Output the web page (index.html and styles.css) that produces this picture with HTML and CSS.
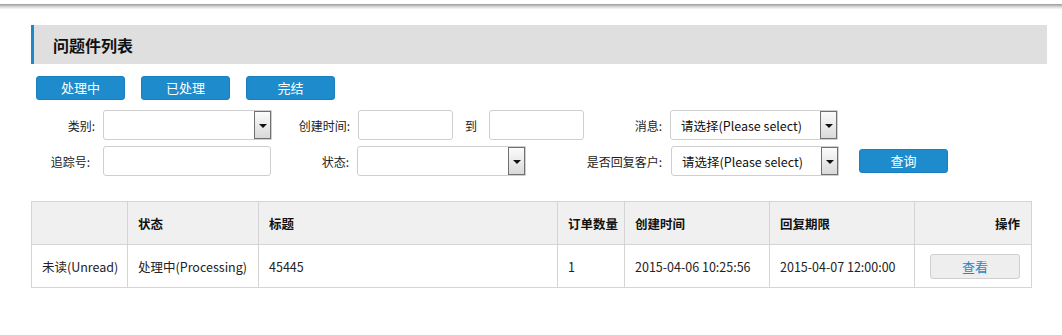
FILE: index.html
```html
<!DOCTYPE html>
<html lang="zh">
<head>
<meta charset="utf-8">
<title>问题件列表</title>
<link rel="stylesheet" href="styles.css">
</head>
<body>
<div class="topline"></div>
<div class="page">
  <div class="title-bar"><h2>问题件列表</h2></div>
  <div class="tabs">
    <button class="btn">处理中</button>
    <button class="btn">已处理</button>
    <button class="btn">完结</button>
  </div>
  <div class="form">
    <div class="row">
      <span class="lbl l1">类别:</span>
      <div class="sel w169"><span class="val"></span><span class="arrow"></span></div>
      <span class="lbl l2">创建时间:</span>
      <div class="inp w95"></div>
      <span class="to">到</span>
      <div class="inp w95"></div>
      <span class="lbl l3">消息:</span>
      <div class="sel w168"><span class="val">请选择(Please select)</span><span class="arrow"></span></div>
    </div>
    <div class="row r2">
      <span class="lbl l1 b">追踪号:</span>
      <div class="inp w168"></div>
      <span class="lbl l2 c">状态:</span>
      <div class="sel w169"><span class="val"></span><span class="arrow"></span></div>
      <span class="lbl l3 d">是否回复客户:</span>
      <div class="sel w168"><span class="val">请选择(Please select)</span><span class="arrow"></span></div>
      <button class="btn query">查询</button>
    </div>
  </div>
  <table class="grid">
    <colgroup>
      <col style="width:96px"><col style="width:131px"><col style="width:299px"><col style="width:67px"><col style="width:145px"><col style="width:145px"><col style="width:117px">
    </colgroup>
    <thead>
      <tr><th></th><th>状态</th><th>标题</th><th>订单数量</th><th>创建时间</th><th>回复期限</th><th class="right">操作</th></tr>
    </thead>
    <tbody>
      <tr><td>未读(Unread)</td><td>处理中(Processing)</td><td>45445</td><td>1</td><td>2015-04-06 10:25:56</td><td>2015-04-07 12:00:00</td><td class="act"><button class="view">查看</button></td></tr>
    </tbody>
  </table>
</div>
</body>
</html>
```

FILE: styles.css
```css
* { box-sizing: border-box; }
body {
  margin: 0;
  background: #fff;
  font-family: "Noto Sans CJK SC", "Open Sans", sans-serif;
  font-size: 12px;
  color: #222;
}
.topline {
  margin-top: 4px;
  height: 5px;
  background: linear-gradient(#9a9a9a, #dcdcdc 60%, #f6f6f6);
}
.page {
  padding: 16px 15px 0 31px;
}
.title-bar {
  height: 39px;
  background: #dfdfdf;
  border-left: 3px solid #1e88c8;
  display: flex;
  align-items: center;
  padding-left: 19px;
}
.title-bar h2 {
  margin: 0;
  font-size: 16px;
  font-weight: bold;
  color: #111;
}
.tabs {
  display: flex;
  gap: 16px;
  margin: 12px 0 0 5px;
}
.btn {
  width: 89px;
  height: 24px;
  border: 1px solid #1a7fbd;
  border-radius: 3px;
  background: #1e8bcd;
  color: #fff;
  font-family: inherit;
  font-size: 13px;
  padding: 0;
  line-height: 20px;
}
.form {
  margin-top: 10px;
  display: flex;
  flex-direction: column;
  gap: 6px;
}
.row {
  display: flex;
  align-items: center;
  height: 30px;
}
.lbl {
  text-align: right;
  color: #222;
  padding-right: 8px;
}
.l1 { width: 72px; }
.l1.b { padding-right: 13px; }
.l2 { width: 86px; }
.l2.c { width: 86px; }
.l3 { width: 86px; }
.l3.d { width: 145px; padding-right: 9px; }
.r2 .inp.w168 { margin-right: 0; }
.to {
  width: 36px;
  text-align: center;
}
.inp, .sel {
  height: 30px;
  border: 1px solid #cfcfcf;
  border-radius: 3px;
  background: #fff;
}
.w95 { width: 95px; }
.w168 { width: 168px; }
.w169 { width: 169px; }
.sel {
  display: flex;
  align-items: stretch;
  padding: 1px;
  border-radius: 3px 0 0 3px;
}
.sel .val {
  flex: 1;
  display: flex;
  align-items: center;
  padding-left: 9px;
  font-size: 12.5px;
  color: #111;
}
.sel .arrow {
  width: 17px;
  border: 1px solid #707070;
  background: linear-gradient(#fbfbfb, #d9d9d9);
  position: relative;
  margin: -1px -1px -1px 0;
}
.sel .arrow::after {
  content: "";
  position: absolute;
  left: 4px;
  top: 12px;
  border-left: 4px solid transparent;
  border-right: 4px solid transparent;
  border-top: 4px solid #111;
}
.r2 .w168 { width: 168px; }
.r2 .sel.w168 { width: 168px; }
.query {
  margin-left: 20px;
}
.grid {
  margin-top: 25px;
  width: 1000px;
  border-collapse: collapse;
  table-layout: fixed;
}
.grid th, .grid td {
  border: 1px solid #d4d4d4;
  height: 43px;
  padding: 0 10px;
  text-align: left;
  font-size: 12.5px;
  white-space: nowrap;
}
.grid th {
  background: #f0f0f0;
  font-weight: bold;
  color: #111;
}
.grid th.right { text-align: right; padding-right: 11px; }
.grid td.act { padding-left: 15px; }
.view {
  width: 90px;
  height: 25px;
  border: 1px solid #cfcfcf;
  border-radius: 3px;
  background: #eeeeee;
  color: #1e88c8;
  font-family: inherit;
  font-size: 13px;
  padding: 0;
}
```
